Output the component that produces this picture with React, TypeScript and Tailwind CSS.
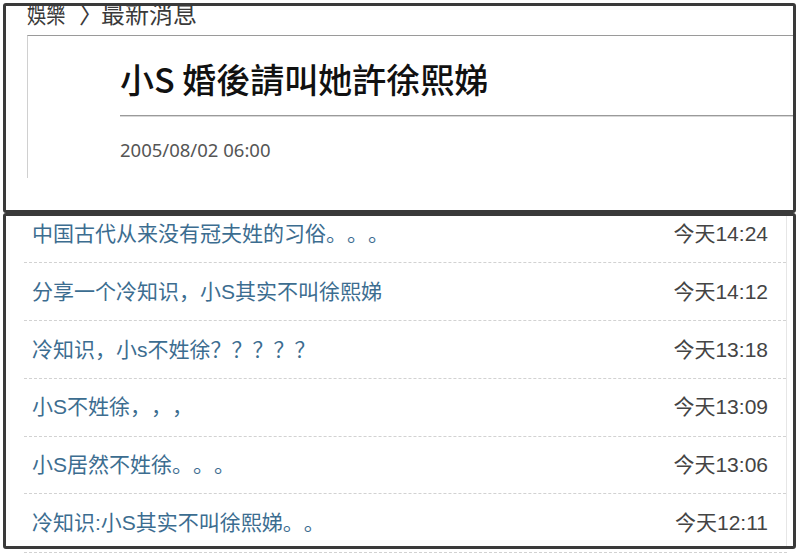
import React from "react";

const rows = [
  { t: "中国古代从来没有冠夫姓的习俗。。。", d: "今天14:24" },
  { t: "分享一个冷知识，小S其实不叫徐熙娣", d: "今天14:12" },
  { t: "冷知识，小s不姓徐？？？？？", d: "今天13:18" },
  { t: "小S不姓徐，，，", d: "今天13:09" },
  { t: "小S居然不姓徐。。。", d: "今天13:06" },
  { t: "冷知识:小S其实不叫徐熙娣。。", d: "今天12:11" },
];

export default function App() {
  return (
    <div className="w-[799px] h-[556px] bg-white overflow-hidden [text-spacing-trim:space-all]">
      {/* Top panel */}
      <div className="mx-[3px] mt-[3px] h-[210px] border-[3px] border-[#3a3a3a] rounded-[3px] overflow-hidden bg-white">
        <div
          className="mt-[-5px] ml-[21px] flex items-end text-[24px] leading-none text-[#3a3a3a] whitespace-nowrap"
          style={{ fontFamily: '"Noto Sans CJK TC", sans-serif' }}
        >
          <span className="inline-block w-[38px] origin-left scale-x-[0.8]">娛樂</span>
          <span className="ml-[14px] inline-block w-[24px]">〉</span>
          <span className="ml-[-2px]">最新消息</span>
        </div>
        <div className="ml-[21px] mt-[10px] h-[143px] border-l border-t border-l-[#d0d0d0] border-t-[#9a9a9a]">
          <div className="pl-[92px]">
            <div
              className="mt-[26px] text-[34px] leading-none font-medium text-[#111] whitespace-nowrap"
              style={{ fontFamily: '"Noto Sans CJK TC", sans-serif' }}
            >
              小S 婚後請叫她許徐熙娣
            </div>
            <div className="mt-[19px] h-[2px] border-t border-[#9a9a9a] bg-[#d8d8d8]" />
            <div
              className="mt-[24px] text-[18.5px] leading-none text-[#555]"
              style={{ fontFamily: '"Noto Sans", sans-serif' }}
            >
              2005/08/02 06:00
            </div>
          </div>
        </div>
      </div>

      {/* Bottom panel */}
      <div className="mx-[3px] h-[336px] border-[3px] border-[#3a3a3a] rounded-[3px] overflow-hidden bg-white">
        <div
          className="mt-[-10.4px] ml-[18px] mr-[6px] border-r border-[#e6e6e6]"
          style={{ fontFamily: '"Liberation Sans", "Noto Sans CJK SC", sans-serif' }}
        >
          {rows.map((r, i) => (
            <div
              key={i}
              className="h-[57.75px] flex items-center justify-between pl-[8px] pr-[18px] border-b border-dashed border-[#d2d2d2] text-[21px]"
            >
              <span className="text-[#3c6d90] whitespace-nowrap">{r.t}</span>
              <span className="text-[#444] whitespace-nowrap">{r.d}</span>
            </div>
          ))}
        </div>
      </div>
      <div className="ml-[24px] mr-[12px] mt-[3px] border-t border-dashed border-[#d2d2d2]" />
    </div>
  );
}
